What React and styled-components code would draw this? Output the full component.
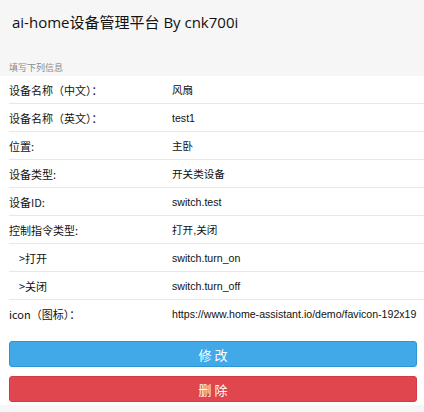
import styled, { createGlobalStyle } from "styled-components";

const GlobalStyle = createGlobalStyle`
  html, body {
    margin: 0;
    padding: 0;
    background-color: #f6f6f6;
    font-family: "Liberation Sans", "Noto Sans CJK SC", sans-serif;
  }
`;

const Page = styled.div`
  width: 424px;
  height: 412px;
  overflow: hidden;
  background-color: #f6f6f6;
`;

const Title = styled.h1`
  margin: 0;
  padding: 12px 12px 0;
  height: 48px;
  box-sizing: border-box;
  color: #111;
  font-weight: 400;
  font-size: 15px;
  line-height: 20px;
  font-family: "Open Sans", "Noto Sans CJK SC", sans-serif;
`;

const SectionLabel = styled.div`
  padding: 13px 9px 0;
  height: 28px;
  box-sizing: border-box;
  color: #8a8a8a;
  font-size: 9px;
  line-height: 14px;
  font-family: "Noto Sans CJK SC", sans-serif;
`;

const Panel = styled.section`
  padding-left: 9px;
  padding-bottom: 3px;
  background-color: #fff;
`;

const Row = styled.div`
  display: flex;
  align-items: center;
  height: 28px;
  box-sizing: border-box;
  border-bottom: ${(p) => (p.$last ? "none" : "1px solid #e8e8e8")};
  font-size: 11px;
  color: #111;
`;

const Label = styled.div`
  flex: 0 0 163px;
  padding-left: ${(p) => (p.$indent ? "10px" : "0")};
  box-sizing: border-box;
  font-family: "Noto Sans CJK SC", sans-serif;
  font-size: 11px;
`;

const Value = styled.div`
  flex: 1;
  min-width: 0;
  overflow: hidden;
  white-space: nowrap;
  font-size: 10.6px;
  font-family: "Liberation Sans", "Noto Sans CJK SC", sans-serif;
`;

const Buttons = styled.div`
  display: flex;
  flex-direction: column;
  gap: 9px;
  padding: 13px 7px 0 0;
`;

const Button = styled.button`
  display: block;
  width: 100%;
  height: 26px;
  padding: 0;
  color: #fff;
  font-size: 13px;
  letter-spacing: 3px;
  text-indent: 3px;
  font-family: "Noto Sans CJK SC", sans-serif;
  background-color: ${(p) => (p.$danger ? "#e0464d" : "#42a9e9")};
  border: 1px solid ${(p) => (p.$danger ? "#d23a41" : "#2b95d8")};
  border-radius: 3px;
`;

const rows = [
  ["设备名称（中文）：", "风扇"],
  ["设备名称（英文）：", "test1"],
  ["位置:", "主卧"],
  ["设备类型:", "开关类设备"],
  ["设备ID:", "switch.test"],
  ["控制指令类型:", "打开,关闭"],
  [">打开", "switch.turn_on", true],
  [">关闭", "switch.turn_off", true],
  ["icon（图标）：", "https://www.home-assistant.io/demo/favicon-192x19"],
];

const App = () => {
  return (
    <Page>
      <GlobalStyle />
      <Title>ai-home设备管理平台 By cnk700i</Title>
      <SectionLabel>填写下列信息</SectionLabel>
      <Panel>
        {rows.map(([label, value, indent], i) => (
          <Row key={label} $last={i === rows.length - 1}>
            <Label $indent={indent}>{label}</Label>
            <Value>{value}</Value>
          </Row>
        ))}
        <Buttons>
          <Button>修改</Button>
          <Button $danger>删除</Button>
        </Buttons>
      </Panel>
    </Page>
  );
};

export default App;
